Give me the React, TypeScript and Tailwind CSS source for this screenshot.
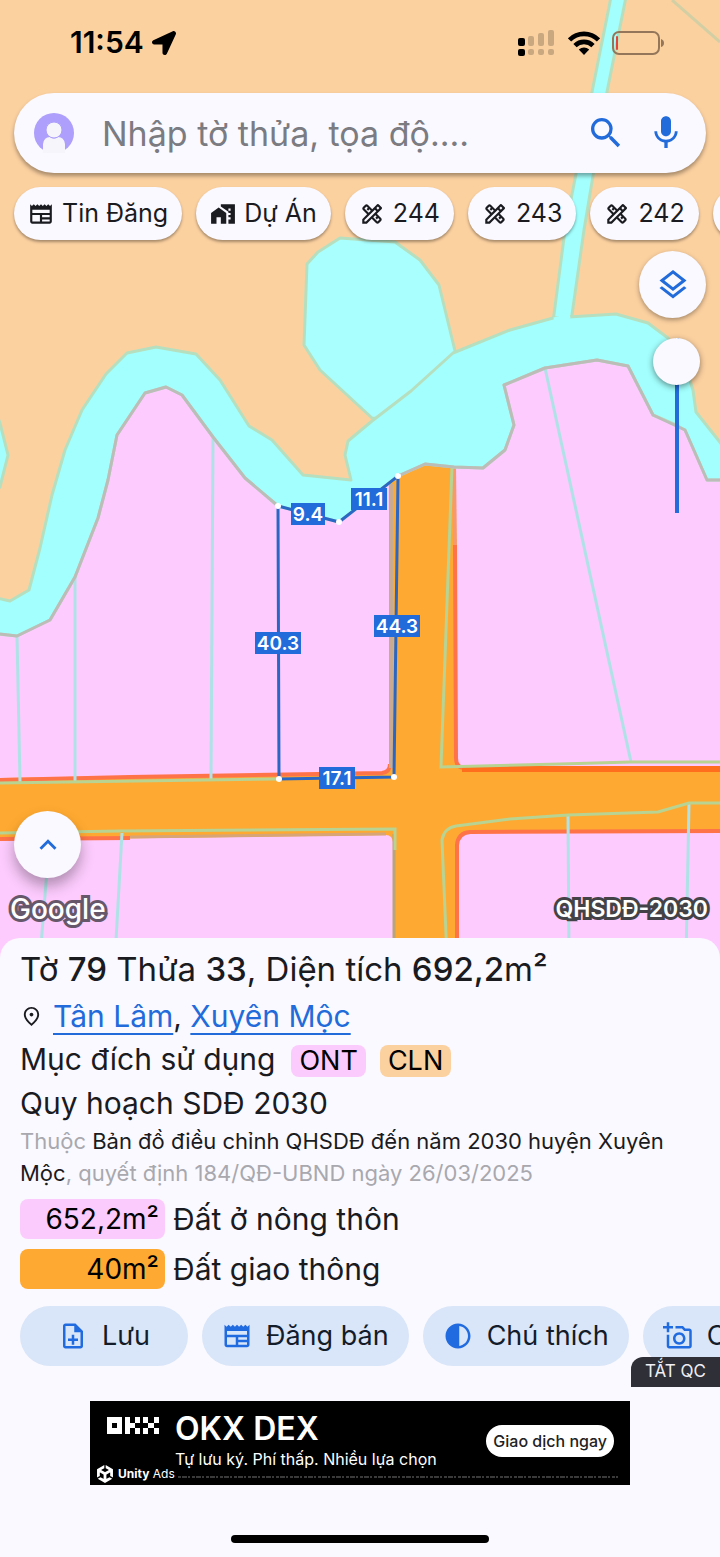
import type { ReactNode } from 'react';
import { FaLocationArrow } from 'react-icons/fa';
import {
  MdContrast,
  MdHomeWork,
  MdKeyboardArrowUp,
  MdMic,
  MdOutlineAddAPhoto,
  MdOutlineDesignServices,
  MdOutlineLayers,
  MdOutlineNewspaper,
  MdOutlineNoteAdd,
  MdOutlinePlace,
  MdSearch,
} from 'react-icons/md';
import { SiUnity } from 'react-icons/si';

const PARCEL = '278,506 339,522 398,476 394,777 279,779';

const CORNERS = [
  [278, 506],
  [339, 522],
  [398, 476],
  [394, 777],
  [279, 779],
];

const EDGES = [
  { text: '9.4', x: 308, y: 514, w: 34 },
  { text: '11.1', x: 369, y: 499, w: 36 },
  { text: '40.3', x: 278, y: 643, w: 46 },
  { text: '44.3', x: 397, y: 626, w: 46 },
  { text: '17.1', x: 337, y: 778, w: 36 },
];

const FILTERS: { icon: ReactNode; label: string }[] = [
  { icon: <MdOutlineNewspaper size={26} />, label: 'Tin Đăng' },
  { icon: <MdHomeWork size={26} />, label: 'Dự Án' },
  { icon: <MdOutlineDesignServices size={26} />, label: '244' },
  { icon: <MdOutlineDesignServices size={26} />, label: '243' },
  { icon: <MdOutlineDesignServices size={26} />, label: '242' },
  { icon: <MdOutlineDesignServices size={26} />, label: '241' },
];

const ACTIONS: { icon: ReactNode; label: string; pad: string }[] = [
  { icon: <MdOutlineNoteAdd size={30} />, label: 'Lưu', pad: 'px-[38px]' },
  { icon: <MdOutlineNewspaper size={30} />, label: 'Đăng bán', pad: 'px-5' },
  { icon: <MdContrast size={30} />, label: 'Chú thích', pad: 'px-5' },
  { icon: <MdOutlineAddAPhoto size={30} />, label: 'Chụp ảnh', pad: 'px-5' },
];

const LAND_USE = [
  { area: '652,2m²', name: 'Đất ở nông thôn', color: 'bg-[#fccbfd]' },
  { area: '40m²', name: 'Đất giao thông', color: 'bg-[#fea931]' },
];

function MapCanvas() {
  return (
    <svg
      className="absolute inset-0 w-full h-full"
      viewBox="0 0 720 958"
      preserveAspectRatio="xMinYMin slice"
      aria-hidden="true"
    >
      <rect width="720" height="958" fill="#fcd1a0" />
      <path d="M672 0 L720 42" stroke="#d3cfa5" strokeWidth="3" />

      {/* roads sit under the residential blocks */}
      <path d="M0 636 L278 500 L398 476 L425 465 L454 467 L720 560 V958 H0Z" fill="#fea931" />

      {/* residential blocks */}
      <g fill="#fdcbfe">
        <path d="M0 634 L17 636 L50 620 L75 577 L98 518 L108 480 L117 435 L145 393 L166 387 L182 395 L213 437 L245 478 L278 506 L339 522 L389 484 L389 766 Q389 771 382 772 L130 776 L0 778Z" />
        <path d="M454 467 L483 468 L514 425 L504 385 L545 368 L597 360 L628 366 L653 415 L685 430 L707 479 L720 480 V766 L465 768 Q456 768 456 758Z" />
        <path d="M0 840 L386 835 Q392 835 393 842 V958 H0Z" />
        <path d="M458 958 V845 Q458 833 470 833 L720 832 V958Z" />
      </g>
      <g fill="none" stroke="#ff7349" strokeWidth="4">
        <path d="M0 780 L130 777 L382 773 Q390 772 390 764" />
        <path d="M454 468 L455 545" stroke="#f69a6c" />
        <path d="M455 545 L456 758 Q456 768 465 768" />
        <path d="M462 769 H720" stroke="#ff6e1c" strokeWidth="6" />
        <path d="M0 839 L130 838" />
        <path d="M130 837 L386 834" stroke="#d8a577" strokeWidth="3" />
        <path d="M457 958 V845 Q458 833 470 832 L720 831" />
      </g>
      <path d="M391 484 V768" stroke="#c9ab91" strokeWidth="4" />
      <path d="M394 834 V958" stroke="#b9a577" strokeWidth="3" />

      {/* cadastral lines */}
      <g fill="none" stroke="#afe2e6" strokeWidth="3">
        <path d="M17 636 L20 782" />
        <path d="M75 577 V782" />
        <path d="M213 437 L211 780" />
        <path d="M545 368 L631 762" />
        <path d="M122 833 L115 958" />
        <path d="M47 870 L40 958" />
        <path d="M568 815 L569 958" />
        <path d="M689 803 L686 958" />
      </g>
      <g fill="none" stroke="#b8d392" strokeWidth="3">
        <path d="M0 783 L279 779" />
        <path d="M0 833 L120 831 L395 829 V850" />
        <path d="M452 467 L441 767 L560 764 L631 762 H720" />
        <path d="M447 958 L442 840 Q444 828 456 826 L510 819 L568 815 L658 812 L689 803 H720" />
      </g>

      {/* water */}
      <g stroke="#b6dfbf" strokeWidth="3" strokeLinejoin="round">
        <path d="M-3 415 L0 423 L8 455 L0 487 L-3 490Z" fill="#a2fffd" />
        <path d="M611 -3 H626 L607 92 L584 230 L571 322 H553 L565 230 L592 92Z" fill="#a2fffd" />
        <path d="M372 418 L320 370 L304 345 L307 264 L318 252 L340 238 L395 242 L420 260 L439 285 L456 355 L400 420Z" fill="#a9fffe" />
        <path
          d="M-3 598 L10 601 L29 590 L40 548 L52 495 L65 450 L82 410 L106 374 L127 353 L156 347 L196 354 L220 380 L249 426 L272 440 L303 475 L351 480 L345 455 L348 441 L372 421 L411 391 L453 353 L510 330 L553 318 L616 314 L648 323 L668 338 L683 360 L693 390 L696 412 L723 446 V480 H707 L685 430 L676 425 L653 415 L628 366 L597 360 L545 368 L504 385 L514 425 L505 450 L483 468 L454 467 L425 464 L398 476 L339 522 L278 506 L245 478 L213 437 L182 395 L166 387 L145 393 L117 435 L108 480 L98 518 L75 577 L50 620 L17 636 L-3 634Z"
          fill="#a2fffd"
        />
        <path d="M554 320 L570 316" stroke="#a2fffd" strokeWidth="5" />
      </g>
      <g fill="none" stroke="#bcbcb9" strokeWidth="3" strokeLinejoin="round">
        <path d="M0 634 L17 636 L50 620 L75 577 L98 518 L108 480 L117 435 L145 393 L166 387 L182 395 L213 437 L245 478 L278 506" />
        <path d="M720 480 H707 L685 430 L653 415 L628 366 L597 360 L545 368 L504 385 L514 425 L505 450 L483 468 L454 467 L425 464 L398 476" />
      </g>

      {/* selected parcel */}
      <polygon points={PARCEL} fill="none" stroke="#2a67c4" strokeWidth="3" />
      {CORNERS.map(([x, y]) => (
        <circle key={`${x}-${y}`} cx={x} cy={y} r="3" fill="#fff" />
      ))}
      {EDGES.map(e => (
        <g key={e.text}>
          <rect x={e.x - e.w / 2} y={e.y - 11} width={e.w} height="22" fill="#216bdb" />
          <text x={e.x} y={e.y + 7} textAnchor="middle" fill="#fff" fontSize="19" fontWeight="600">
            {e.text}
          </text>
        </g>
      ))}
    </svg>
  );
}

function StatusBar() {
  return (
    <div className="flex items-center justify-between h-[93px] pl-[70px] pr-[55px] pb-2 text-black">
      <div className="flex items-center gap-2 text-[30px] font-semibold">
        11:54
        <FaLocationArrow size={24} />
      </div>
      <div className="flex items-center gap-3">
        <svg width="38" height="26" viewBox="0 0 38 26" aria-hidden="true">
          <g>
            <rect x="0" y="8" width="7" height="8" rx="2" />
            <rect x="0" y="19" width="7" height="7" rx="2" />
          </g>
          <g fill="#c9a880">
            <rect x="10" y="6" width="6" height="10" rx="2" />
            <rect x="20" y="3" width="6" height="13" rx="2" />
            <rect x="30" y="0" width="6" height="16" rx="2" />
            <rect x="10" y="19" width="6" height="6" rx="2" />
            <rect x="20" y="19" width="6" height="6" rx="2" />
            <rect x="30" y="19" width="6" height="6" rx="2" />
          </g>
        </svg>
        <svg width="32" height="24" viewBox="0 0 32 24" aria-hidden="true">
          <g fill="none" stroke="#000" strokeWidth="4.6">
            <path d="M1.5 9 C9.5 0.8 22.5 0.8 30.5 9" />
            <path d="M7 14.6 C12 9.6 20 9.6 25 14.6" />
          </g>
          <path d="M10.8 18.6 C13.8 15.8 18.2 15.8 21.2 18.6 L16 24Z" />
        </svg>
        <svg width="53" height="24" viewBox="0 0 53 24" aria-hidden="true">
          <rect x="1" y="1" width="46" height="22" rx="6" fill="none" stroke="#94775a" strokeWidth="2" />
          <rect x="4" y="5" width="2" height="14" rx="1" fill="#e5443b" />
          <path d="M49 8 Q52 9 52 12 Q52 15 49 16Z" fill="#94775a" />
        </svg>
      </div>
    </div>
  );
}

function SearchBar() {
  return (
    <form
      className="flex items-center h-20 mx-3.5 px-5 rounded-full bg-[#faf9ff] shadow-[0_3px_4px_rgba(0,0,0,0.35)]"
      onSubmit={e => e.preventDefault()}
    >
      <button type="button" aria-label="Tài khoản" className="shrink-0">
        <svg width="40" height="40" viewBox="0 0 40 40">
          <circle cx="20" cy="20" r="20" fill="#ad9ffb" />
          <path d="M9 40 V31 Q10 24 16 24 Q20 27 24 24 Q30 24 31 31 V40Z" fill="#f5f5fb" />
          <circle cx="20" cy="17" r="8" fill="#f5f5fb" stroke="#ad9ffb" strokeWidth="1" />
        </svg>
      </button>
      <input
        type="text"
        aria-label="Tìm kiếm"
        placeholder="Nhập tờ thửa, tọa độ...."
        className="flex-1 min-w-0 ml-7 bg-transparent text-[34px] text-[#1a1b21] placeholder:text-[#7b7b82] outline-none"
      />
      <button type="submit" aria-label="Tìm" className="shrink-0 text-[#216bdb]">
        <MdSearch size={40} />
      </button>
      <button type="button" aria-label="Giọng nói" className="shrink-0 ml-5 text-[#216bdb]">
        <MdMic size={40} />
      </button>
    </form>
  );
}

function AdBanner() {
  return (
    <div className="relative flex items-center w-3/4 h-[84px] mx-auto mt-[35px] pl-[17px] pr-4 bg-black text-white">
      <svg className="self-start mt-4 shrink-0" width="52" height="17" viewBox="0 0 52 17" fill="#fff" aria-label="OKX">
        <path fillRule="evenodd" d="M0 0H15V17H0Z M5 6V11H10V6Z" />
        <path d="M18 0H23V17H18Z M23 6H28V11H23Z M28 0H33V6H28Z M28 11H33V17H28Z" />
        <path d="M36 0H41V6H36Z M47 0H52V6H47Z M41 6H47V11H41Z M36 11H41V17H36Z M47 11H52V17H47Z" />
      </svg>
      <div className="flex-1 ml-4 mb-1">
        <div className="text-[32px] leading-9 font-semibold">OKX DEX</div>
        <div className="text-base whitespace-nowrap">Tự lưu ký. Phí thấp. Nhiều lựa chọn</div>
      </div>
      <button
        type="button"
        className="shrink-0 h-8 px-[7px] mb-1 rounded-full bg-white text-base font-medium text-[#222] whitespace-nowrap"
      >
        Giao dịch ngay
      </button>
      <div className="absolute left-1.5 bottom-0.5 flex items-center gap-1 text-xs">
        <SiUnity size={18} />
        <span>
          <b>Unity</b> Ads
        </span>
      </div>
      <svg className="absolute left-[88px] bottom-1.5 w-[440px] h-1" aria-hidden="true">
        <path d="M0 2 H440" stroke="#3a3a3a" strokeWidth="2" strokeDasharray="3 1 5 1 2 2" />
      </svg>
    </div>
  );
}

function DetailPanel() {
  return (
    <section className="relative -mt-5 pt-3 rounded-t-[20px] bg-[#faf9ff] overflow-hidden">
      <div className="px-5">
        <h1 className="text-[33px] leading-[38px] font-normal">
          Tờ <span className="font-medium">79</span> Thửa <span className="font-medium">33</span>, Diện tích{' '}
          <span className="font-medium">692,2</span>m²
        </h1>
        <p className="flex items-center gap-2.5 mt-[9px] text-[30px] leading-[38px]">
          <MdOutlinePlace size={23} className="shrink-0" />
          <span>
            <a href="#tan-lam" className="text-[#216bdb] underline decoration-2 underline-offset-[6px]">
              Tân Lâm
            </a>
            ,{' '}
            <a href="#xuyen-moc" className="text-[#216bdb] underline decoration-2 underline-offset-[6px]">
              Xuyên Mộc
            </a>
          </span>
        </p>
        <p className="flex items-center mt-1 text-[30px] leading-10">
          Mục đích sử dụng
          <span className="mt-1 ml-4 px-2 rounded-lg bg-[#fccbfd] text-[27px] leading-8 text-black">ONT</span>
          <span className="mt-1 ml-3.5 px-2 rounded-lg bg-[#fcd1a0] text-[27px] leading-8 text-black">CLN</span>
        </p>
        <h2 className="mt-1 text-[30px] leading-10">Quy hoạch SDĐ 2030</h2>
        <p className="mt-0.5 pr-4 text-[22px] leading-8 text-[#a8a8ae]">
          Thuộc{' '}
          <span className="text-[#1a1b21]">Bản đồ điều chỉnh QHSDĐ đến năm 2030 huyện Xuyên Mộc</span>, quyết định
          184/QĐ-UBND ngày 26/03/2025
        </p>
        <ul className="flex flex-col gap-2.5 mt-2.5">
          {LAND_USE.map(l => (
            <li key={l.area} className="flex items-center gap-2 text-[30px] leading-10">
              <span className={`w-[145px] pr-1.5 rounded-lg text-right text-[28px] text-black ${l.color}`}>
                {l.area}
              </span>
              {l.name}
            </li>
          ))}
        </ul>
      </div>

      <div className="relative mt-[17px]">
        <div className="flex gap-3.5 pl-5 overflow-hidden">
          {ACTIONS.map(a => (
            <button
              key={a.label}
              type="button"
              className={`flex items-center gap-3.5 shrink-0 h-[60px] rounded-full bg-[#d9e5f8] text-[27px] text-[#131c2b] whitespace-nowrap ${a.pad}`}
            >
              <span className="text-[#216be0]">{a.icon}</span>
              {a.label}
            </button>
          ))}
        </div>
        <button
          type="button"
          className="absolute right-0 top-[51px] h-[30px] px-3.5 rounded-tl-xl bg-[#2e2f37] text-[17px] text-[#efeff5]"
        >
          TẮT QC
        </button>
      </div>

      <AdBanner />
      <div className="w-[258px] h-2 mx-auto mt-[50px] mb-3.5 rounded-full bg-black" />
    </section>
  );
}

export default function App() {
  return (
    <main className="flex flex-col min-h-screen overflow-hidden bg-[#faf9ff] text-[#1a1b21] font-['Inter','Noto_Sans',sans-serif]">
      <section className="relative flex-1 flex">
        <MapCanvas />
        <div className="relative flex flex-col w-full min-w-0">
          <StatusBar />
          <SearchBar />
          <div className="flex gap-3.5 pl-3.5 pt-3.5 pb-[11px] overflow-hidden">
            {FILTERS.map(f => (
              <button
                key={f.label}
                type="button"
                className="flex items-center gap-2 shrink-0 h-[53px] px-3.5 rounded-full bg-[#faf9ff] text-[25px] whitespace-nowrap shadow-[0_2px_3px_rgba(0,0,0,0.35)]"
              >
                {f.icon}
                {f.label}
              </button>
            ))}
          </div>
          <div className="flex flex-col items-end gap-5 pr-3.5">
            <button
              type="button"
              aria-label="Lớp bản đồ"
              className="flex items-center justify-center size-[67px] rounded-full bg-[#faf9ff] text-[#216bdb] shadow-[0_2px_5px_rgba(0,0,0,0.35)]"
            >
              <MdOutlineLayers size={36} />
            </button>
            <input
              type="range"
              min={0}
              max={100}
              defaultValue={100}
              aria-label="Độ mờ lớp quy hoạch"
              className="appearance-none mr-1.5 w-[47px] h-[175px] [writing-mode:vertical-lr] [direction:rtl] bg-[linear-gradient(#216bdb,#216bdb)] bg-[length:4px_100%] bg-center bg-no-repeat [&::-webkit-slider-thumb]:appearance-none [&::-webkit-slider-thumb]:size-[47px] [&::-webkit-slider-thumb]:rounded-full [&::-webkit-slider-thumb]:bg-[#faf9ff] [&::-webkit-slider-thumb]:shadow-[0_2px_6px_rgba(0,0,0,0.45)]"
            />
          </div>
          <div className="mt-auto pb-[35px]">
            <button
              type="button"
              aria-label="Mở rộng"
              className="flex items-center justify-center size-[67px] ml-3.5 rounded-full bg-[#faf9ff] text-[#216bdb] shadow-[0_8px_14px_rgba(0,0,0,0.3)]"
            >
              <MdKeyboardArrowUp size={34} />
            </button>
            <div className="flex items-center justify-between mt-[17px] pl-2.5 pr-3 leading-7 text-white [paint-order:stroke_fill]">
              <span className="text-[28px] font-medium [-webkit-text-stroke:6px_#66576b]">Google</span>
              <span className="text-[23px] font-semibold [-webkit-text-stroke:6px_#434347]">QHSDĐ-2030</span>
            </div>
          </div>
        </div>
      </section>
      <DetailPanel />
    </main>
  );
}
